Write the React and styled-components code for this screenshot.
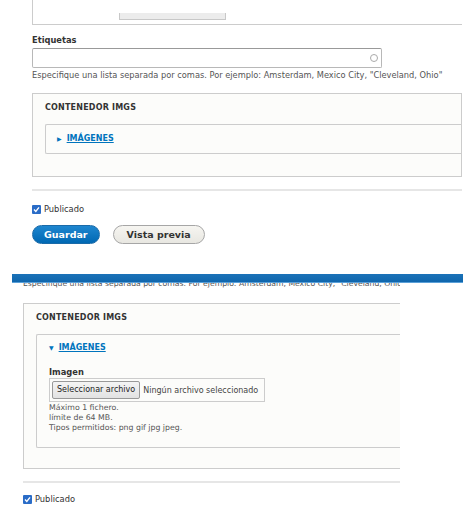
import React from 'react'
import styled, { createGlobalStyle } from 'styled-components'

const Global = createGlobalStyle`
  html, body {
    margin: 0;
    padding: 0;
    background: #fff;
  }
  body {
    width: 473px;
    height: 520px;
    overflow: hidden;
    font-family: "DejaVu Sans", "Liberation Sans", sans-serif;
    color: #333;
  }
`

const Page = styled.div`
  display: flex;
  flex-direction: column;
`

const FormArea = styled.div`
  padding: 0 11px 0 32px;
  display: flex;
  flex-direction: column;
`

const Viewport = styled.div`
  margin: 0 73px 0 23px;
  overflow: hidden;
  display: flex;
  flex-direction: column;
`

const PrevField = styled.div`
  height: 25px;
  border-left: 1px solid #ccc;
  border-bottom: 1px solid #ccc;
  display: flex;
  align-items: flex-end;
  padding: 0 0 4px 86px;
  box-sizing: border-box;
`

const PrevButtonEdge = styled.div`
  width: 105px;
  height: 6px;
  background: #ececec;
  border: 1px solid #c8c8c8;
  border-top: none;
`

const Label = styled.div`
  font-size: 8.3px;
  font-weight: bold;
  color: #333;
  margin-top: ${p => p.$top || 0}px;
  line-height: 10px;
`

const TextInput = styled.div`
  width: 350px;
  height: 20px;
  margin-top: 3px;
  box-sizing: border-box;
  border: 1px solid #b8b8b8;
  border-top-color: #999;
  border-radius: 2px;
  display: flex;
  align-items: center;
  justify-content: flex-end;
  padding-right: 3px;
`

const Throbber = styled.span`
  width: 6px;
  height: 6px;
  border: 1px solid #aaa;
  border-radius: 50%;
`

const Help = styled.div`
  font-size: ${p => p.$size || 8.25}px;
  color: #555;
  line-height: 10px;
  margin-top: ${p => p.$top || 0}px;
  white-space: nowrap;
`

const Fieldset = styled.div`
  border: 1px solid #ccc;
  background: #fcfcfa;
  padding: 9px 0 ${p => p.$bottom}px 12px;
  margin-top: ${p => p.$top}px;
  ${p => p.$open && 'border-right: none; margin-right: -40px;'}
`

const Legend = styled.div`
  font-size: 8px;
  font-weight: bold;
  text-transform: uppercase;
  color: #333;
  line-height: 10px;
  letter-spacing: 0.2px;
`

const Details = styled.div`
  margin-top: ${p => p.$top}px;
  border: 1px solid #ccc;
  border-right: none;
  border-radius: 2px 0 0 2px;
  background: #fcfcfa;
  padding: ${p => p.$pad};
`

const Summary = styled.div`
  display: flex;
  align-items: center;
  gap: 5px;
  font-size: 8px;
  font-weight: bold;
  line-height: 10px;
`

const Arrow = styled.span`
  font-size: 6px;
  color: #0074bd;
`

const SummaryLink = styled.a`
  color: #0074bd;
  text-decoration: underline;
`

const FileBox = styled.div`
  margin-top: 1px;
  display: flex;
  align-items: center;
  gap: 3px;
  border: 1px solid #ccc;
  padding: 2px;
  width: 216px;
  box-sizing: border-box;
  font-size: 8px;
  color: #444;
  white-space: nowrap;
`

const FileButton = styled.span`
  background: linear-gradient(#f4f4f4, #e2e2e2);
  border: 1px solid #999;
  border-radius: 2px;
  padding: 3px 4px;
  font-size: 8px;
  color: #222;
  line-height: 10px;
`

const Divider = styled.div`
  height: 2px;
  background: #e6e6e6;
  margin-top: ${p => p.$top}px;
  ${p => p.$open && 'margin-right: -40px;'}
`

const CheckRow = styled.label`
  display: flex;
  align-items: center;
  gap: 3px;
  margin-top: ${p => p.$top}px;
  font-size: 8.3px;
  color: #333;
  line-height: 10px;
`

const CheckBox = styled.span`
  width: 9px;
  height: 9px;
  border-radius: 1px;
  background: #2a6cc7;
  display: flex;
  align-items: center;
  justify-content: center;
`

const Actions = styled.div`
  display: flex;
  gap: 13px;
  margin-top: 11px;
`

const Button = styled.button`
  font-family: "DejaVu Sans", "Liberation Sans", sans-serif;
  font-weight: bold;
  font-size: 9.5px;
  height: 19px;
  padding: 0 ${p => p.$px}px;
  border-radius: 10px;
  cursor: pointer;
  ${p => p.$primary
    ? 'background: linear-gradient(#1e86cf, #0068b3); color: #fff; border: 1px solid #1a6aa8;'
    : 'background: linear-gradient(#f6f5f1, #e8e7e1); color: #333; border: 1px solid #a6a6a6;'}
`

const Bar = styled.div`
  height: 8px;
  margin: 30px 10px 0 12px;
  background: linear-gradient(#1b72b8, #0f66ad);
  border-bottom: 1px solid #5aa0d8;
  position: relative;
  z-index: 1;
`

function Check() {
  return (
    <CheckBox>
      <svg width="7" height="7" viewBox="0 0 7 7">
        <path d="M1 3.6 L2.8 5.4 L6 1.4" fill="none" stroke="#fff" strokeWidth="1.4" />
      </svg>
    </CheckBox>
  )
}

const hint = 'Especifique una lista separada por comas. Por ejemplo: Amsterdam, Mexico City, "Cleveland, Ohio"'

export default function App() {
  return (
    <Page>
      <Global />

      {/* node form, lower half */}
      <FormArea>
        <PrevField>
          <PrevButtonEdge />
        </PrevField>

        <Label $top={10}>Etiquetas</Label>
        <TextInput>
          <Throbber />
        </TextInput>
        <Help $top={2}>{hint}</Help>

        <Fieldset $top={13} $bottom={22}>
          <Legend>Contenedor imgs</Legend>
          <Details $top={11} $pad="9px 0 9px 11px">
            <Summary>
              <Arrow>▶</Arrow>
              <SummaryLink>IMÁGENES</SummaryLink>
            </Summary>
          </Details>
        </Fieldset>

        <Divider $top={12} />

        <CheckRow $top={13}>
          <Check />
          Publicado
        </CheckRow>

        <Actions>
          <Button $primary $px={11}>Guardar</Button>
          <Button $px={13}>Vista previa</Button>
        </Actions>
      </FormArea>

      <Bar />

      {/* same form with the images group expanded */}
      <Viewport>
        <Help $size={7.7} $top={-4}>{hint}</Help>

        <Fieldset $open $top={14} $bottom={20}>
          <Legend>Contenedor imgs</Legend>
          <Details $top={11} $pad="8px 0 14px 12px">
            <Summary>
              <Arrow>▼</Arrow>
              <SummaryLink>IMÁGENES</SummaryLink>
            </Summary>

            <Label $top={14}>Imagen</Label>
            <FileBox>
              <FileButton>Seleccionar archivo</FileButton>
              Ningún archivo seleccionado
            </FileBox>
            <Help $size={7.8} $top={1}>Máximo 1 fichero.</Help>
            <Help $size={7.8}>límite de 64 MB.</Help>
            <Help $size={7.8}>Tipos permitidos: png gif jpg jpeg.</Help>
          </Details>
        </Fieldset>

        <Divider $open $top={12} />

        <CheckRow $top={11}>
          <Check />
          Publicado
        </CheckRow>
      </Viewport>
    </Page>
  )
}
